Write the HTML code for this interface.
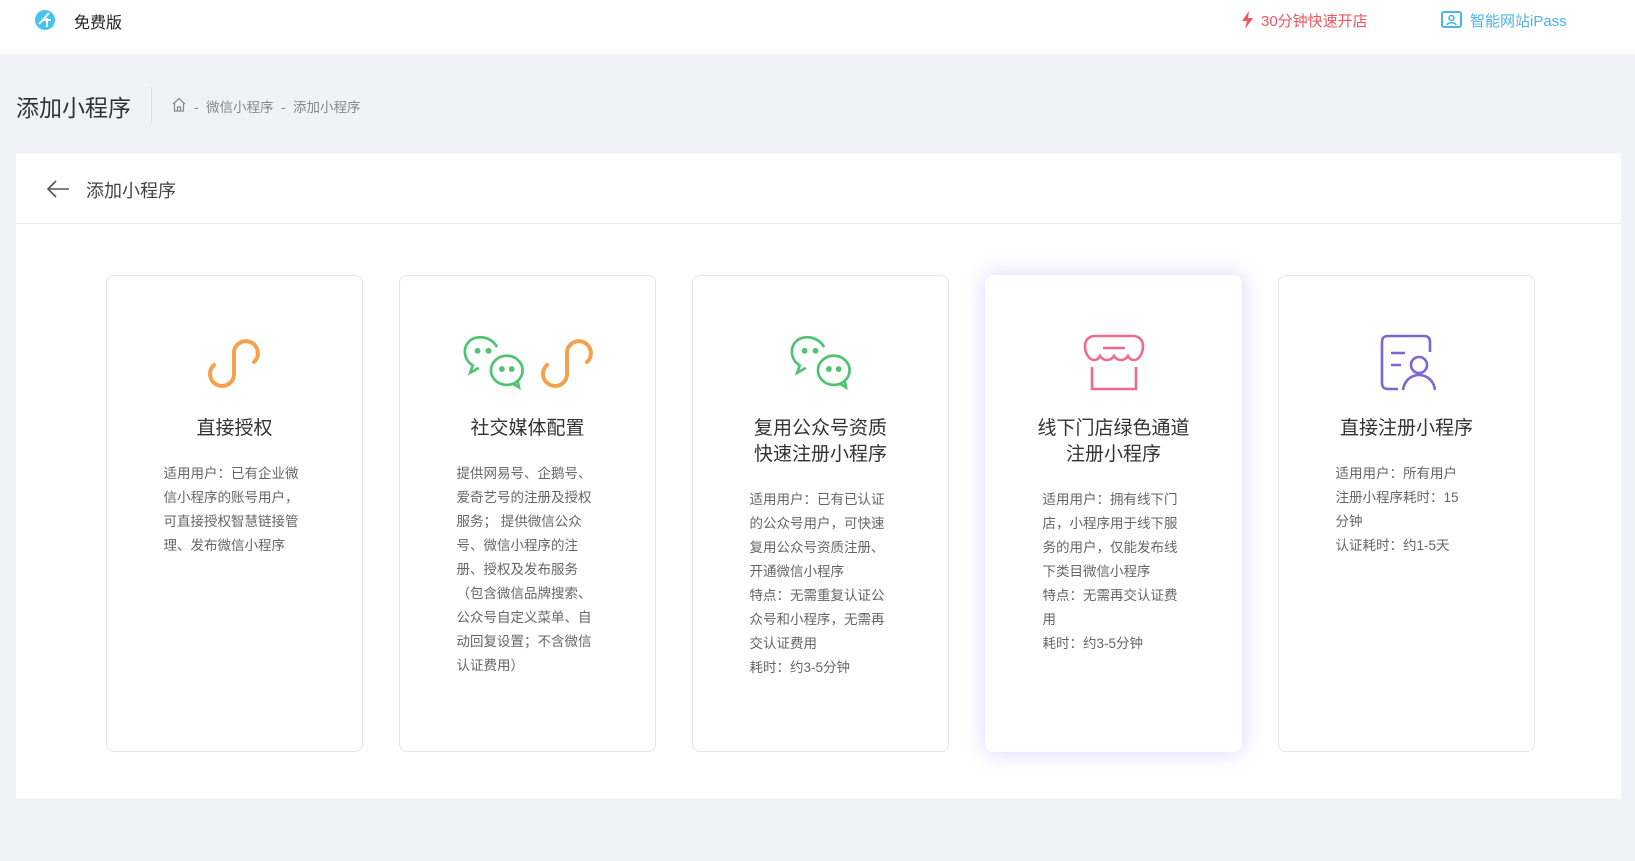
<!DOCTYPE html>
<html><head><meta charset="utf-8"><style>
*{margin:0;padding:0;box-sizing:border-box}
body{width:1635px;height:861px;background:#f0f2f7;font-family:"Liberation Sans","Noto Sans CJK SC",sans-serif;position:relative;overflow:hidden;color:#333}
.top{position:absolute;left:0;top:0;width:1635px;height:54px;background:#fff}
.abs{position:absolute;white-space:nowrap}
.panel{position:absolute;left:16px;top:153px;width:1605px;height:646px;background:#fff}
.ph{height:71px;border-bottom:1px solid #ebebeb;position:relative}
.card{position:absolute;top:275px;width:257px;height:477px;border:1px solid #e6e6e6;border-radius:8px;background:#fff;text-align:center}
.card.hl{border-color:#fff;box-shadow:0 0 22px rgba(125,110,255,.3)}
.icon{height:58px;margin-top:58px;display:flex;justify-content:center;align-items:center;gap:12px}
.t{font-size:19px;color:#333;line-height:26px;margin-top:24px}
.d{width:142px;margin:20px auto 0;text-align:left;font-size:13.5px;line-height:24px;color:#666}
</style></head><body>
<div class="top"></div>
<svg class="abs" style="left:34px;top:9px" width="22" height="22" viewBox="0 0 22 22"><circle cx="11" cy="11" r="10" fill="#45c3f0"/><path d="M5 15L15 4M9 11h8M13 9v9" stroke="#fff" stroke-width="2" fill="none"/></svg>
<div class="abs" style="left:74px;top:9px;font-size:16px;color:#222">免费版</div>
<svg class="abs" style="left:1240px;top:11px" width="14" height="18" viewBox="0 0 14 18"><path d="M9 0L2 10h5l-2 8 8-11H8z" fill="#f0545f"/></svg>
<div class="abs" style="left:1261px;top:10px;font-size:15px;color:#f0545f">30分钟快速开店</div>
<svg class="abs" style="left:1441px;top:11px" width="21" height="17" viewBox="0 0 21 17"><rect x="1" y="1" width="19" height="15" rx="2" fill="none" stroke="#4db3e8" stroke-width="2"/><circle cx="10.5" cy="7" r="2.5" fill="none" stroke="#4db3e8" stroke-width="1.6"/><path d="M6 14c1-3 8-3 9 0" fill="none" stroke="#4db3e8" stroke-width="1.6"/></svg>
<div class="abs" style="left:1470px;top:10px;font-size:15px;color:#4db3e8">智能网站iPass</div>

<div class="abs" style="left:16px;top:89px;font-size:23px;color:#333">添加小程序</div>
<div class="abs" style="left:151px;top:87px;width:1px;height:35px;background:#dde0e6"></div>
<svg class="abs" style="left:171px;top:97px" width="16" height="15" viewBox="0 0 16 15"><path d="M2 7L8 1.5 14 7M3.5 6v8h9V6M6.5 14v-4h3v4" fill="none" stroke="#888" stroke-width="1.2"/></svg>
<div class="abs" style="left:194px;top:96px;font-size:13.5px;color:#888">-&nbsp;&nbsp;微信小程序&nbsp;&nbsp;-&nbsp;&nbsp;添加小程序</div>

<div class="panel"><div class="ph">
<svg class="abs" style="left:30px;top:27px" width="24" height="18" viewBox="0 0 24 18"><path d="M23 9H2M10 1L2 9l8 8" fill="none" stroke="#555" stroke-width="1.6"/></svg>
<div class="abs" style="left:70px;top:24px;font-size:18px;color:#444">添加小程序</div>
</div></div>

<svg width="0" height="0" style="position:absolute"><defs>
<g id="mp"><path d="M7 30A12 12 0 1 0 27 38V20A12 12 0 1 1 47 27" fill="none" stroke="#f5a04a" stroke-width="4" stroke-linecap="round"/></g>
<g id="wx" fill="none" stroke="#4cc472" stroke-width="2.2"><path d="M27 10c-3-6-10-9-16-8C4 3-1 9 1 17c1 4 3 6 6 8l-2 6 7-4"/><ellipse cx="35" cy="29" rx="13" ry="12"/><path d="M40 40l5 3-1-5"/><circle cx="11" cy="13" r="1.3" fill="#4cc472"/><circle cx="20" cy="13" r="1.3" fill="#4cc472"/><circle cx="31" cy="28" r="1.3" fill="#4cc472"/><circle cx="39" cy="28" r="1.3" fill="#4cc472"/></g>
</defs></svg>

<div class="card" style="left:106px"><div class="icon"><svg width="56" height="56" viewBox="0 0 56 56"><use href="#mp"/></svg></div>
<div class="t">直接授权</div><div class="d">适用用户：已有企业微信小程序的账号用户，可直接授权智慧链接管理、发布微信小程序</div></div>

<div class="card" style="left:399px"><div class="icon"><svg width="68" height="56" viewBox="-1 0 51 46"><use href="#wx"/></svg><svg width="56" height="56" viewBox="0 0 56 56"><use href="#mp"/></svg></div>
<div class="t">社交媒体配置</div><div class="d">提供网易号、企鹅号、爱奇艺号的注册及授权服务； 提供微信公众号、微信小程序的注册、授权及发布服务（包含微信品牌搜索、公众号自定义菜单、自动回复设置；不含微信认证费用）</div></div>

<div class="card" style="left:692px"><div class="icon"><svg width="68" height="56" viewBox="-1 0 51 46"><use href="#wx"/></svg></div>
<div class="t">复用公众号资质<br>快速注册小程序</div><div class="d">适用用户：已有已认证的公众号用户，可快速复用公众号资质注册、开通微信小程序<br>特点：无需重复认证公众号和小程序，无需再交认证费用<br>耗时：约3-5分钟</div></div>

<div class="card hl" style="left:985px"><div class="icon"><svg width="62" height="58" viewBox="0 0 62 58"><path d="M12 2h38c6 0 10 4 10 10 0 7-4 14-9 14-3 0-5-2-6-4-2 3-4 4-7 4s-5-1-7-4c-2 3-4 4-7 4s-5-1-7-4c-1 2-3 4-6 4C6 26 2 19 2 12 2 6 6 2 12 2z" fill="none" stroke="#ee6a8e" stroke-width="2.6"/><path d="M20 14h22" stroke="#ee6a8e" stroke-width="2.6"/><path d="M9 33v22h44V33" fill="none" stroke="#ee6a8e" stroke-width="2.6"/></svg></div>
<div class="t">线下门店绿色通道<br>注册小程序</div><div class="d">适用用户：拥有线下门店，小程序用于线下服务的用户，仅能发布线下类目微信小程序<br>特点：无需再交认证费用<br>耗时：约3-5分钟</div></div>

<div class="card" style="left:1278px"><div class="icon"><svg width="58" height="58" viewBox="0 0 58 58"><path d="M20 55H10c-4 0-6-2-6-6V8c0-4 2-6 6-6h36c4 0 6 2 6 6v10" fill="none" stroke="#7f64d6" stroke-width="2.6"/><path d="M13 19h14M13 31h10" stroke="#7f64d6" stroke-width="2.6"/><circle cx="41" cy="31" r="8" fill="none" stroke="#7f64d6" stroke-width="2.6"/><path d="M25 56c1-9 8-15 16-15s15 6 16 15" fill="none" stroke="#7f64d6" stroke-width="2.6"/></svg></div>
<div class="t">直接注册小程序</div><div class="d">适用用户：所有用户<br>注册小程序耗时：15<br>分钟<br>认证耗时：约1-5天</div></div>
</body></html>
